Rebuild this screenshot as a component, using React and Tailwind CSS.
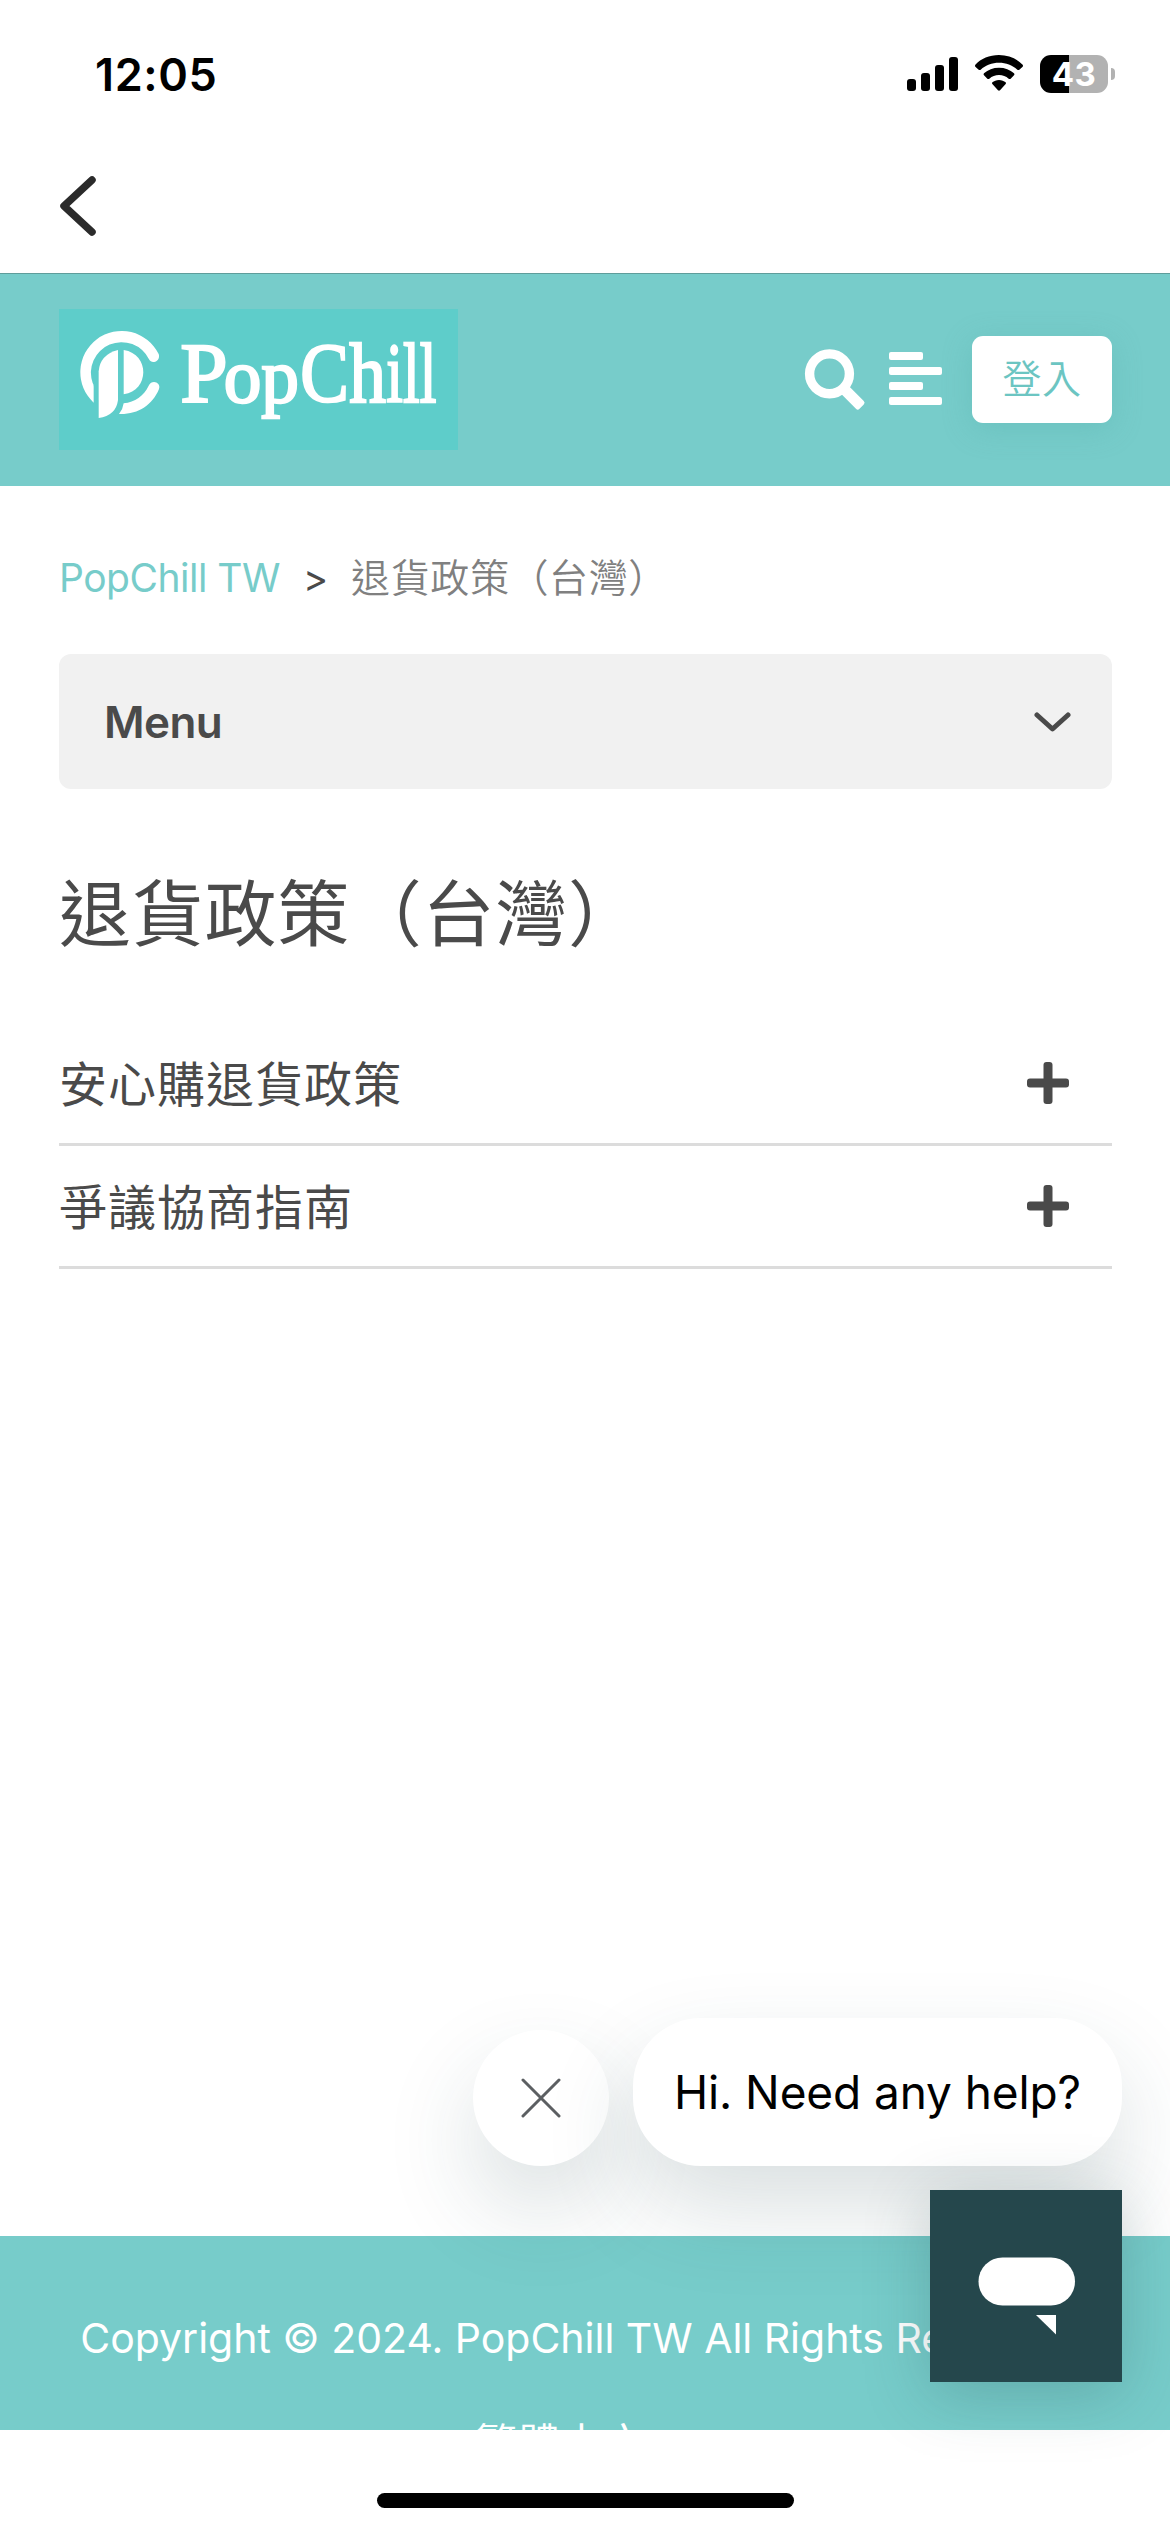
const sections = ["安心購退貨政策", "爭議協商指南"];

function StatusBar() {
  return (
    <div className="flex h-[147px] items-start justify-between pl-[95px] pr-[55px] pt-[47px]">
      <span className="text-[45px] leading-[56px] font-semibold tracking-[0.6px] text-black">
        12:05
      </span>

      <div className="mt-[8px] flex items-start">
        {/* Signal */}
        <div className="mt-[2px] flex h-[34px] items-end gap-[5px]">
          <div className="h-3 w-[9px] rounded-[3px] bg-black" />
          <div className="h-[18px] w-[9px] rounded-[3px] bg-black" />
          <div className="h-[26px] w-[9px] rounded-[3px] bg-black" />
          <div className="h-[34px] w-[9px] rounded-[3px] bg-black" />
        </div>

        {/* Wifi */}
        <svg className="ml-[17px] h-9 w-12" viewBox="0 0 144 108">
          <path d="M72 0C101 0 126 11 143 29Q145 32 143 35L133 44Q130 46 127 44C112 30 93 23 72 23S32 30 17 44Q14 46 11 44L1 35Q-1 32 1 29C18 11 43 0 72 0Z" />
          <path d="M72 38C90 38 105 44 117 55Q120 58 117 61L107 71Q104 73 101 71C93 64 83 60 72 60S51 64 43 71Q40 73 37 71L27 61Q24 58 27 55C39 44 54 38 72 38Z" />
          <path d="M72 75C80 75 87 78 92 82Q94 85 92 87L75 106Q72 108 69 106L52 87Q50 85 52 82C57 78 64 75 72 75Z" />
        </svg>

        {/* Battery */}
        <div className="ml-[17px] flex items-center">
          <div className="flex h-[38px] w-[68px] items-center justify-center rounded-[11px] bg-linear-to-r from-black from-[43%] to-[#b2b2b2] to-[43%]">
            <span className="text-[33px] leading-[38px] font-bold tracking-[0.5px] text-white">
              43
            </span>
          </div>
          <div className="ml-[3px] h-3 w-1 rounded-r-full bg-[#b2b2b2]" />
        </div>
      </div>
    </div>
  );
}

function Logo() {
  return (
    <svg className="h-[141px] w-[399px] bg-[#5ecdca]" viewBox="58 57 1197 423">
      <g fill="white">
        <path d="M162 338A123.900 123.900 0 1 1 357 192C364 212 337 226 328 208A91.800 91.800 0 0 0 159 279Q162 283 162 290Z" />
        <path d="M238 372Q250 357 252 340C286 336 312 318 327 287C337 267 365 278 358 297C338 346 294 374 238 372Z" />
        <path d="M235 180V330Q229 377 177 384V244Q181 194 235 180Z" />
        <path d="M252 180C331 192 330 302 252 313Z" />
        <text
          x="422"
          y="337"
          fontSize="256"
          fontFamily="'Liberation Serif', serif"
          stroke="white"
          strokeWidth="7"
        >
          P
          <tspan x="552" fontSize="226" textLength="226" lengthAdjust="spacingAndGlyphs">op</tspan>
          <tspan x="782" textLength="146" lengthAdjust="spacingAndGlyphs">C</tspan>
          <tspan x="929" textLength="110" lengthAdjust="spacingAndGlyphs">h</tspan>
          <tspan x="1040" textLength="150" lengthAdjust="spacingAndGlyphs">ill</tspan>
        </text>
      </g>
    </svg>
  );
}

function Header() {
  return (
    <header className="flex h-[213px] items-center border-t border-[#5f9d9b] bg-[#77ccca] pl-[59px] pr-[58px] pb-px">
      <Logo />
      <svg className="ml-auto h-[62px] w-[62px]" viewBox="0 0 62 62">
        <circle cx="25.5" cy="24.8" r="19.9" fill="none" stroke="white" strokeWidth="9.4" />
        <rect x="55" y="-5.5" width="26.5" height="11" rx="2.5" fill="white" transform="rotate(45)" />
      </svg>
      <div className="mb-[2px] ml-[23px] flex w-[53px] flex-col gap-[7px]">
        <div className="h-2 w-[34px] rounded-[2px] bg-white" />
        <div className="h-2 w-full rounded-[2px] bg-white" />
        <div className="h-2 w-[34px] rounded-[2px] bg-white" />
        <div className="h-2 w-full rounded-[2px] bg-white" />
      </div>
      <button className="ml-[30px] h-[87px] w-[140px] rounded-[11px] bg-white text-[39px] font-[350] tracking-[0.6px] text-[#6cc5c2] shadow-[0_6px_30px_rgba(80,170,165,0.3)]">
        登入
      </button>
    </header>
  );
}

function PlusIcon() {
  return (
    <svg className="h-[42px] w-[42px]" viewBox="0 0 42 42" fill="#4a4a4a">
      <rect x="16.5" width="9" height="42" rx="3" />
      <rect y="16.5" width="42" height="9" rx="3" />
    </svg>
  );
}

function ChatWidget() {
  return (
    <div className="absolute right-12 top-[2018px] flex flex-col items-end gap-6">
      <div className="flex items-end gap-6">
        <button className="flex h-[136px] w-[136px] items-center justify-center rounded-full bg-white shadow-[0_42px_90px_rgba(36,71,75,0.17)]">
          <svg className="h-10 w-10" viewBox="0 0 40 40" stroke="#5c5f62" strokeWidth="3" strokeLinecap="round">
            <path d="M2 2L38 38M38 2L2 38" />
          </svg>
        </button>
        <div className="flex h-[148px] w-[489px] items-center justify-center rounded-[68px] bg-white text-[46px] tracking-[-0.1px] text-black shadow-[0_42px_90px_rgba(36,71,75,0.17)]">
          <span className="whitespace-nowrap">Hi. Need any help?</span>
        </div>
      </div>
      <button className="h-48 w-48 bg-[#25474c] shadow-[0_12px_60px_rgba(36,71,75,0.25)]">
        <svg className="h-full w-full" viewBox="0 0 192 192" fill="white">
          <rect x="48.5" y="67.5" width="96.5" height="48" rx="24" />
          <path d="M106 125H126V144.5Z" />
        </svg>
      </button>
    </div>
  );
}

export default function App() {
  return (
    <div className="relative flex h-[2532px] w-[1170px] flex-col overflow-hidden bg-white font-['Inter','Noto_Sans_CJK_TC',sans-serif] text-[#4a4a4a]">
      <StatusBar />
      <nav className="h-[126px] pl-[59px] pt-[28px]">
        <svg
          className="h-[62px] w-[38px]"
          viewBox="0 0 38 62"
          fill="none"
          stroke="#2b2b2b"
          strokeWidth="7.5"
          strokeLinecap="round"
          strokeLinejoin="round"
        >
          <path d="M33 5L5 31L33 57" />
        </svg>
      </nav>
      <Header />

      <main className="flex grow flex-col pl-[59px] pr-[58px]">
        <div className="mt-[62px] flex h-[60px] items-center text-[39px] leading-[60px]">
          <a className="tracking-[-0.5px] text-[#77ccca]">PopChill TW</a>
          <span className="ml-[23px] text-[38px]">&gt;</span>
          <span className="ml-[23px] font-[350] tracking-[0.6px] text-[#808080]">退貨政策（台灣）</span>
        </div>

        <div className="mt-[46px] flex h-[135px] items-center justify-between rounded-[12px] bg-[#f1f1f1] pl-[45px] pr-[41px]">
          <span className="text-[44px] font-semibold tracking-[-0.6px]">Menu</span>
          <svg
            className="h-5 w-[37px]"
            viewBox="0 0 37 20"
            fill="none"
            stroke="#4a4a4a"
            strokeWidth="5"
            strokeLinecap="round"
            strokeLinejoin="round"
          >
            <path d="M3 3L18.5 17L34 3" />
          </svg>
        </div>

        <h1 className="mt-[77px] h-[96px] text-[72px] leading-[96px] font-normal tracking-[0.7px]">
          退貨政策（台灣）
        </h1>

        <div className="mt-[61px]">
          {sections.map((title) => (
            <div
              key={title}
              className="flex h-[123px] items-center justify-between border-b-[3px] border-[#dcdcdc] pr-[43px]"
            >
              <span className="pt-[4px] text-[48px] tracking-[1px]">{title}</span>
              <PlusIcon />
            </div>
          ))}
        </div>
      </main>

      <footer className="flex h-[194px] shrink-0 flex-col items-center overflow-hidden bg-[#77ccca] pt-[72px] text-[41px] text-white">
        <p className="leading-[60px] tracking-[-0.02px] whitespace-nowrap">
          Copyright © 2024. PopChill TW All Rights Reserved.
        </p>
        <p className="mt-[45px] mr-[48px] leading-[60px] tracking-[1.5px]">繁體中文</p>
      </footer>
      <div className="flex h-[102px] shrink-0 justify-center pt-[63px]">
        <div className="h-[15px] w-[417px] rounded-full bg-black" />
      </div>

      <ChatWidget />
    </div>
  );
}
